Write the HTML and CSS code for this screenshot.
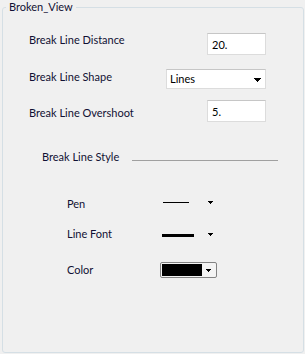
FILE: index.html
```html
<!DOCTYPE html>
<html lang="en">
<head>
  <meta charset="UTF-8">
  <title>Broken_View</title>
  <link rel="stylesheet" href="styles.css">
</head>
<body>
  <fieldset class="group">
    <legend>Broken_View</legend>

    <div class="params">
      <div class="row row-distance">
        <label class="lbl" for="distance">Break Line Distance</label>
        <input id="distance" class="textbox" type="text" value="20.">
      </div>

      <div class="row row-shape">
        <label class="lbl">Break Line Shape</label>
        <div class="combo">
          <span>Lines</span>
          <svg class="combo-arrow" width="7" height="4" viewBox="0 0 7 4"><path d="M0 0h7v1H0zM1 1h5v1H1zM2 2h3v1H2zM3 3h1v1H3z"/></svg>
        </div>
      </div>

      <div class="row row-overshoot">
        <label class="lbl" for="overshoot">Break Line Overshoot</label>
        <input id="overshoot" class="textbox" type="text" value="5.">
      </div>
    </div>

    <div class="style-head">
      <span class="head-label">Break Line Style</span>
      <span class="rule"></span>
    </div>

    <div class="srow srow-pen">
      <span class="slbl">Pen</span>
      <div class="picker">
        <span class="sample sample-thin"></span>
        <svg class="drop drop-pen" width="5" height="3" viewBox="0 0 5 3"><path d="M0 0h5v1H0zM1 1h3v1H1zM2 2h1v1H2z"/></svg>
      </div>
    </div>

    <div class="srow srow-font">
      <span class="slbl">Line Font</span>
      <div class="picker">
        <span class="sample sample-thick"></span>
        <svg class="drop drop-font" width="5" height="3" viewBox="0 0 5 3"><path d="M0 0h5v1H0zM1 1h3v1H1zM2 2h1v1H2z"/></svg>
      </div>
    </div>

    <div class="srow srow-color">
      <span class="slbl">Color</span>
      <div class="colorbox">
        <span class="swatch"></span>
        <span class="color-drop">
          <svg width="5" height="3" viewBox="0 0 5 3"><path d="M0 0h5v1H0zM1 1h3v1H1zM2 2h1v1H2z"/></svg>
        </span>
      </div>
    </div>
  </fieldset>
</body>
</html>
```

FILE: styles.css
```css
body {
  margin: 0;
  width: 305px;
  height: 354px;
  background-color: #f0f0f0;
  font-family: Lato, 'Liberation Sans', sans-serif;
  font-size: 11px;
  line-height: 14px;
  color: #101034;
}

.group {
  margin: 0 1px 0 2px;
  padding: 0;
  height: 353px;
  box-sizing: border-box;
  min-width: 0;
  border: 1px solid #d5dfe5;
  border-radius: 3px;
}

legend {
  margin-left: 3px;
  padding: 0 3px;
  line-height: 14px;
}

.params {
  padding: 19px 37px 0 26px;
}

.row {
  display: flex;
  justify-content: space-between;
  align-items: flex-start;
}

.row-distance {
  height: 22px;
}

.row-shape {
  margin-top: 14px;
  height: 20px;
}

.row-shape .lbl {
  margin-top: 1px;
}

.row-overshoot {
  margin-top: 11px;
  height: 22px;
}

.row-overshoot .lbl {
  margin-top: 6px;
}

.textbox {
  width: 59px;
  height: 22px;
  box-sizing: border-box;
  margin: 0;
  padding: 0 4px;
  border: 1px solid #dcdcdc;
  border-top-color: #c6c6c6;
  background: #fff;
  font: inherit;
  color: #000;
  outline: none;
}

.combo {
  width: 100px;
  height: 20px;
  box-sizing: border-box;
  display: flex;
  align-items: center;
  justify-content: space-between;
  padding: 0 4px 0 3px;
  border: 1px solid #dcdcdc;
  border-top-color: #c6c6c6;
  background: #fff;
  color: #000;
}

.combo-arrow {
  display: block;
  margin-top: 1px;
}

.style-head {
  display: flex;
  align-items: flex-start;
  height: 14px;
  margin-top: 28px;
  padding-left: 39px;
}

.head-label {
  width: 90px;
}

.rule {
  width: 146px;
  margin-top: 10px;
  border-top: 1px solid #a0a0a0;
}

.srow {
  display: flex;
  align-items: flex-start;
  height: 14px;
  padding-left: 64px;
}

.srow-pen {
  margin-top: 33px;
}

.srow-font {
  margin-top: 16px;
}

.srow-color {
  margin-top: 22px;
}

.slbl {
  width: 93px;
}

.picker {
  display: flex;
  align-items: flex-start;
  width: 56px;
  height: 14px;
}

.sample {
  display: block;
  background: #000;
}

.sample-thin {
  margin: 5px 0 0 3px;
  width: 26px;
  height: 1px;
}

.sample-thick {
  margin: 7px 0 0 2px;
  width: 32px;
  height: 3px;
}

.drop {
  display: block;
}

.drop-pen {
  margin: 4px 0 0 19px;
}

.drop-font {
  margin: 6px 0 0 14px;
}

.colorbox {
  display: flex;
  width: 57px;
  height: 16px;
  margin-top: -1px;
  padding: 1px;
  box-sizing: border-box;
  border: 1px solid #838383;
  border-radius: 2px;
  background: #f4f4f4;
}

.swatch {
  width: 40px;
  background: #000;
}

.color-drop {
  flex: 1;
  display: flex;
  align-items: center;
  justify-content: center;
  padding-top: 1px;
}

.color-drop svg {
  display: block;
}
```
